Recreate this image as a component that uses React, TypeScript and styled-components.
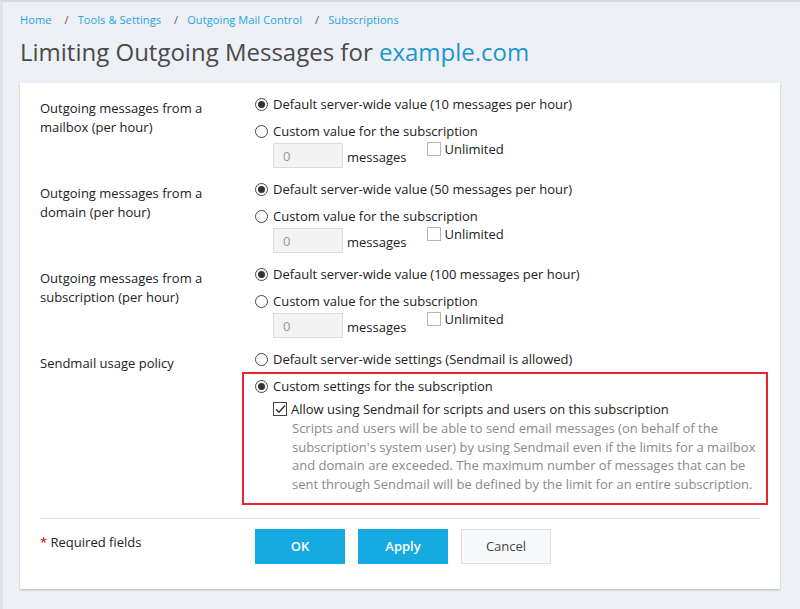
import React from "react"
import styled, { createGlobalStyle } from "styled-components"

const GlobalStyle = createGlobalStyle`
  html, body {
    margin: 0;
    padding: 0;
    background: #edf0f4;
  }
  body {
    font-family: "Open Sans", "Noto Sans", sans-serif;
    font-size: 13px;
    color: #222;
  }
`

const Page = styled.div`
  min-height: 609px;
  box-sizing: border-box;
  border-top: 2px solid #d6d9dd;
  border-left: 3px solid #e0e3e7;
  padding: 9px 20px 20px 17px;
`

const Breadcrumbs = styled.nav`
  display: flex;
  align-items: center;
  height: 18px;
  line-height: 18px;
  font-size: 11px;
  letter-spacing: 0.1px;
`

const Crumb = styled.a`
  color: #1fa5de;
  text-decoration: none;
`

const Sep = styled.span`
  color: #555;
  padding: 0 9px 0 13px;
`

const Title = styled.h1`
  margin: 6px 0 0;
  font-size: 24px;
  font-weight: 400;
  line-height: 34px;
  color: #4a4a4a;
`

const Domain = styled.span`
  color: #2196cc;
`

const Card = styled.div`
  margin-top: 14px;
  background: #fff;
  box-shadow: 0 1px 2px rgba(0, 0, 0, 0.25);
  padding: 11px 20px 25px;
`

const Row = styled.div`
  display: grid;
  grid-template-columns: 215px 1fr;
  margin-bottom: 11px;
`

const Label = styled.div`
  padding-top: 5px;
  line-height: 18.5px;
  color: #222;
`

const Fields = styled.div`
  display: flex;
  flex-direction: column;
  gap: 7px;
`

const Option = styled.label`
  display: flex;
  align-items: center;
  height: 20px;
  line-height: 20px;
  color: #222;
`

const RadioMark = styled.span<{ $checked?: boolean }>`
  width: 11px;
  height: 11px;
  border: 1px solid #444;
  border-radius: 50%;
  margin-right: 5px;
  display: inline-flex;
  align-items: center;
  justify-content: center;
  flex-shrink: 0;
  background: #fff;
  &::after {
    content: "";
    width: 7px;
    height: 7px;
    border-radius: 50%;
    background: ${(p) => (p.$checked ? "#333" : "transparent")};
  }
`

const BoxMark = styled.span<{ $checked?: boolean }>`
  width: 12px;
  height: 12px;
  border: 1px solid ${(p) => (p.$checked ? "#444" : "#b5b5b5")};
  background: #fff;
  display: inline-flex;
  align-items: center;
  justify-content: center;
  flex-shrink: 0;
  margin-right: 4px;
`

const ValueRow = styled.div`
  display: flex;
  align-items: flex-start;
  height: 25px;
  margin-top: -5px;
  padding-left: 18px;
`

const NumberInput = styled.input`
  box-sizing: border-box;
  width: 70px;
  height: 25px;
  border: 1px solid #dcdcdc;
  background: #f3f3f3;
  color: #999;
  font: inherit;
  padding: 0 9px;
  outline: none;
`

const Units = styled.span`
  margin-left: 4px;
  margin-top: 4px;
  line-height: 20px;
`

const Unlimited = styled.label`
  display: flex;
  align-items: center;
  margin-left: 20px;
  margin-top: -1px;
  line-height: 14px;
  height: 14px;
`

const Highlight = styled.div`
  border: 2px solid #e52530;
  margin: -4px -8px 0 -13px;
  padding: 2px 0 9px 11px;
`

const SubOption = styled.div`
  padding-left: 18px;
  margin-top: 3px;
`

const Hint = styled.p`
  margin: 0;
  padding-left: 19px;
  color: #8a8a8a;
  line-height: 18.7px;
`

const Divider = styled.hr`
  border: 0;
  border-top: 1px solid #e3e5e8;
  margin: 13px 0 10px;
`

const Footer = styled.div`
  display: grid;
  grid-template-columns: 215px 1fr;
  align-items: start;
`

const Required = styled.div`
  padding-top: 4px;
  line-height: 18px;
  font-size: 13px;
  span {
    color: #c00;
  }
`

const Buttons = styled.div`
  display: flex;
  gap: 13px;
`

const Button = styled.button<{ $primary?: boolean }>`
  width: 90px;
  height: 35px;
  font-family: "Open Sans", sans-serif;
  font-size: 13px;
  font-weight: ${(p) => (p.$primary ? 600 : 400)};
  border: 1px solid ${(p) => (p.$primary ? "#15abe0" : "#dde0e4")};
  background: ${(p) => (p.$primary ? "#15abe0" : "#f8f9fa")};
  color: ${(p) => (p.$primary ? "#fff" : "#444")};
  cursor: pointer;
`

const Check = () => (
  <svg width="11" height="10" viewBox="0 0 11 10">
    <path d="M1 5.2 L4 8.2 L10 1.5" fill="none" stroke="#333" strokeWidth="1.4" />
  </svg>
)

type Group = { label: string[]; amount: number }

const groups: Group[] = [
  { label: ["Outgoing messages from a", "mailbox (per hour)"], amount: 10 },
  { label: ["Outgoing messages from a", "domain (per hour)"], amount: 50 },
  { label: ["Outgoing messages from a", "subscription (per hour)"], amount: 100 },
]

const LimitGroup: React.FC<{ group: Group }> = ({ group }) => (
  <Row>
    <Label>
      {group.label[0]}
      <br />
      {group.label[1]}
    </Label>
    <Fields>
      <Option>
        <RadioMark $checked />
        Default server-wide value ({group.amount} messages per hour)
      </Option>
      <Option>
        <RadioMark />
        Custom value for the subscription
      </Option>
      <ValueRow>
        <NumberInput defaultValue="0" disabled />
        <Units>messages</Units>
        <Unlimited>
          <BoxMark />
          Unlimited
        </Unlimited>
      </ValueRow>
    </Fields>
  </Row>
)

export default function App() {
  return (
    <>
      <GlobalStyle />
      <Page>
        <Breadcrumbs>
          <Crumb href="#">Home</Crumb>
          <Sep>/</Sep>
          <Crumb href="#">Tools &amp; Settings</Crumb>
          <Sep>/</Sep>
          <Crumb href="#">Outgoing Mail Control</Crumb>
          <Sep>/</Sep>
          <Crumb href="#">Subscriptions</Crumb>
        </Breadcrumbs>
        <Title>
          Limiting Outgoing Messages for <Domain>example.com</Domain>
        </Title>
        <Card>
          {groups.map((g, i) => (
            <LimitGroup key={i} group={g} />
          ))}
          <Row>
            <Label>Sendmail usage policy</Label>
            <Fields>
              <Option>
                <RadioMark />
                Default server-wide settings (Sendmail is allowed)
              </Option>
              <Highlight>
                <Option>
                  <RadioMark $checked />
                  Custom settings for the subscription
                </Option>
                <SubOption>
                  <Option>
                    <BoxMark $checked>
                      <Check />
                    </BoxMark>
                    Allow using Sendmail for scripts and users on this subscription
                  </Option>
                  <Hint>
                    Scripts and users will be able to send email messages (on behalf of the
                    subscription's system user) by using Sendmail even if the limits for a mailbox
                    and domain are exceeded. The maximum number of messages that can be sent
                    through Sendmail will be defined by the limit for an entire subscription.
                  </Hint>
                </SubOption>
              </Highlight>
            </Fields>
          </Row>
          <Divider />
          <Footer>
            <Required>
              <span>*</span> Required fields
            </Required>
            <Buttons>
              <Button $primary>OK</Button>
              <Button $primary>Apply</Button>
              <Button>Cancel</Button>
            </Buttons>
          </Footer>
        </Card>
      </Page>
    </>
  )
}
